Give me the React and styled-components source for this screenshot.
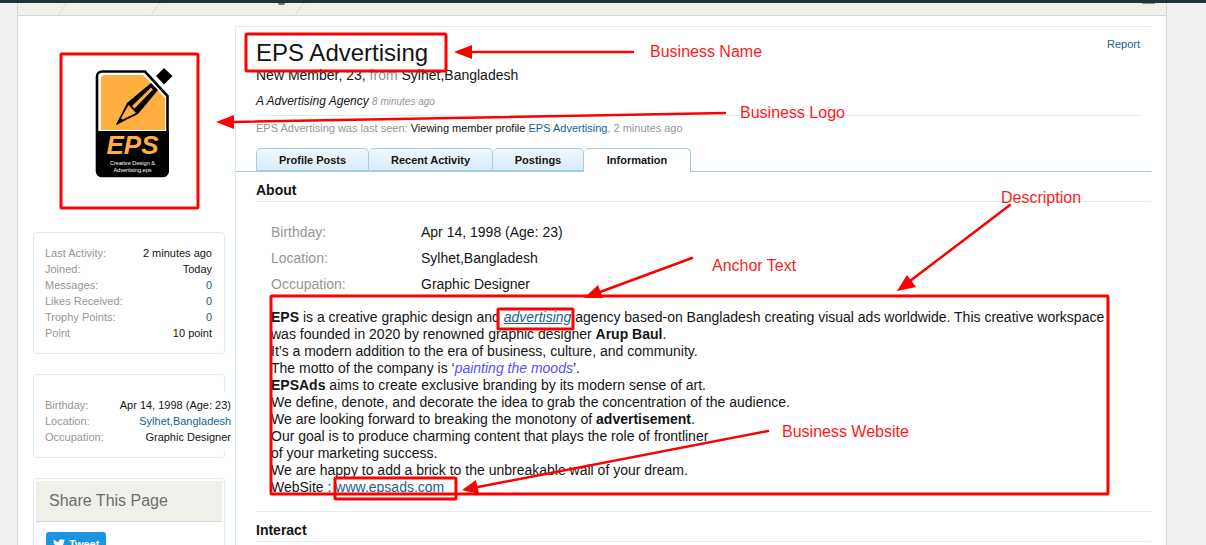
import styled, { createGlobalStyle } from "styled-components";
import { FaTwitter } from "react-icons/fa";

const GlobalStyle = createGlobalStyle`
  html, body {
    margin: 0;
    padding: 0;
    height: 545px;
    overflow: hidden;
    background: #f0f0f0;
    font-family: "Liberation Sans", Arial, sans-serif;
    color: #141414;
  }
`;

const Page = styled.div`
  position: relative;
  width: 1206px;
  height: 545px;
  overflow: hidden;
`;
const TopBar = styled.div`
  height: 3px;
  background: #22343a;
`;
const Wrapper = styled.div`
  margin: 0 39px 0 17px;
  border-left: 1px solid #d4d4d4;
  border-right: 1px solid #d4d4d4;
  background: #fff;
  height: 542px;
`;
const Strip = styled.div`
  display: flex;
  height: 12px;
  background: #f0f0ea;
  border-bottom: 1px solid #d6d6d0;
  overflow: hidden;
`;
const Crumb = styled.div`
  width: ${(p) => p.$w}px;
  height: 12px;
  border-right: 1px solid #d8d8d2;
  transform: skewX(-35deg);
`;
const Descender = styled.span`
  width: 7px;
  height: 2px;
  margin-left: -22px;
  border-radius: 0 0 3px 3px;
  background: #6d6d6d;
`;
const StripIcon = styled.span`
  width: 13px;
  height: 1px;
  margin-left: auto;
  margin-right: 11px;
  background: #8c8c8c;
`;
const Columns = styled.div`
  display: flex;
  padding: 10px 15px 0 15px;
  gap: 10px;
`;
const Sidebar = styled.div`
  width: 192px;
  flex-shrink: 0;
  display: flex;
  flex-direction: column;
`;
const Avatar = styled.div`
  height: 206px;
  padding: 39px 0 0 57px;
  box-sizing: border-box;
`;
const Card = styled.div`
  border: 1px solid #d7edfc;
  border-radius: 4px;
  box-sizing: border-box;
  margin-bottom: 20px;
  padding: ${(p) => p.$pad};
  height: ${(p) => p.$h}px;
  flex-shrink: 0;
`;
const Pairs = styled.dl`
  margin: 0 ${(p) => p.$over || 0}px 0 0;
  padding: ${(p) => (p.$over ? "6px 0" : 0)};
  background: #fff;
  position: relative;
`;
const Pair = styled.div`
  display: flex;
  justify-content: space-between;
  font-size: 11px;
  line-height: 16px;
`;
const Term = styled.dt`
  color: #969696;
`;
const Value = styled.dd`
  margin: 0;
  color: ${(p) => (p.$link ? "#176093" : "#141414")};
`;
const ShareHead = styled.div`
  height: 41px;
  margin: 2px;
  box-sizing: border-box;
  padding-left: 13px;
  background: #f0f0ea;
  border-bottom: 1px solid #d6d6d0;
  color: #6d6d6d;
  font-size: 16px;
  line-height: 39px;
`;
const TweetButton = styled.div`
  display: inline-flex;
  align-items: center;
  gap: 4px;
  margin: 8px 0 0 12px;
  width: 60px;
  height: 24px;
  box-sizing: border-box;
  padding: 0 0 0 7px;
  border-radius: 3px;
  background: #1b95e0;
  color: #fff;
  font-size: 11px;
  font-weight: bold;
`;
const Main = styled.div`
  position: relative;
  width: 916px;
  height: 519px;
  flex-shrink: 0;
  box-sizing: border-box;
  border-left: 1px solid #d7edfc;
  border-top: 1px solid #d7edfc;
  overflow: hidden;
`;
const Report = styled.a`
  position: absolute;
  top: 11px;
  right: 11px;
  font-size: 11px;
  line-height: 13px;
  color: #176093;
`;
const Header = styled.div`
  padding: 11px 11px 0 20px;
`;
const Title = styled.h1`
  margin: 0;
  font-size: 24px;
  font-weight: normal;
  line-height: 30px;
  color: #141414;
`;
const Subtitle = styled.div`
  margin-top: -1px;
  font-size: 14px;
  line-height: 17px;
  span {
    color: #969696;
  }
`;
const Status = styled.div`
  margin-top: 10px;
  padding-bottom: 6px;
  border-bottom: 1px solid #d7edfc;
  font-size: 12px;
  line-height: 14px;
  font-style: italic;
  small {
    font-size: 10px;
    color: #969696;
  }
`;
const LastSeen = styled.div`
  margin-top: 6px;
  font-size: 11px;
  line-height: 13px;
  color: #969696;
  b {
    font-weight: normal;
    color: #141414;
  }
  a {
    color: #176093;
  }
`;
const Tabs = styled.div`
  display: flex;
  margin-top: 13px;
  padding-left: 20px;
  height: 24px;
  box-sizing: border-box;
  border-bottom: 1px solid #a5cae4;
`;
const Tab = styled.div`
  width: ${(p) => p.$w}px;
  height: ${(p) => (p.$active ? 24 : 23)}px;
  box-sizing: border-box;
  border: 1px solid #a5cae4;
  border-bottom: ${(p) => (p.$active ? "none" : "1px solid #a5cae4")};
  border-left-width: ${(p) => (p.$first ? 1 : 0)}px;
  border-radius: 5px 5px 0 0;
  background: ${(p) =>
    p.$active ? "#fff" : "linear-gradient(to bottom, #f0f7fd, #d9ebfa)"};
  font-size: 11px;
  font-weight: bold;
  line-height: 23px;
  text-align: center;
  color: #141414;
`;
const Section = styled.div`
  padding: 0 0 0 20px;
`;
const SectionTitle = styled.h3`
  margin: ${(p) => p.$top}px 0 0;
  height: 21px;
  box-sizing: border-box;
  border-bottom: 1px solid #e0edf6;
  font-size: 14px;
  font-weight: bold;
  line-height: 18px;
  color: #141414;
`;
const InfoList = styled.div`
  padding: 17px 0 0 15px;
`;
const InfoRow = styled.div`
  display: flex;
  height: 26px;
  font-size: 14px;
  line-height: 26px;
`;
const InfoLabel = styled.div`
  width: 150px;
  color: #969696;
`;
const Description = styled.div`
  margin: 12px 0 0 15px;
  font-size: 14px;
  line-height: 17px;
  white-space: nowrap;
  a {
    color: #176093;
  }
  em {
    color: #5b4dff;
  }
`;
const Rule = styled.div`
  margin-top: 15px;
  border-top: 1px solid #e0edf6;
`;
const Overlay = styled.svg`
  position: absolute;
  left: 0;
  top: 0;
  pointer-events: none;
`;
const Label = styled.div`
  position: absolute;
  left: ${(p) => p.$x}px;
  top: ${(p) => p.$y}px;
  font-size: 16px;
  line-height: 18px;
  color: #fe1a1a;
  white-space: nowrap;
`;

const Logo = () => (
  <svg width="85" height="115" viewBox="90 65 85 115">
    <path
      d="M102 71.5 H145 L167.5 96 V171 a5 5 0 0 1 -5 5 H102 a5 5 0 0 1 -5 -5 V76.5 a5 5 0 0 1 5 -5 Z"
      fill="#fff"
      stroke="#000"
      strokeWidth="2.6"
    />
    <path d="M105 75 H143 L165 98 V130 H101 V79 a4 4 0 0 1 4 -4 Z" fill="#ffae40" />
    <path d="M96 131 H169 V171 a6 6 0 0 1 -6 6 H102 a6 6 0 0 1 -6 -6 Z" fill="#000" />
    <path d="M164 68 L172.5 76 L164 84.5 L156 76 Z" fill="#000" />
    <path d="M116 125 L127 103 L151 83 L158 90 L138 114 Z" fill="#000" />
    <path d="M119.5 121 L128.5 105 L136 113 Z" fill="#ffae40" />
    <path d="M116 125 L120 117 L123.5 121 Z" fill="#000" />
    <path d="M132 106 L151 87.5 L153 89.5 L134.5 108.5 Z" fill="#ffae40" />
    <text
      x="132.5"
      y="154"
      textAnchor="middle"
      fontFamily="'Liberation Sans', sans-serif"
      fontWeight="bold"
      fontStyle="italic"
      fontSize="26"
      fill="#ffae40"
    >
      EPS
    </text>
    <text
      x="132.5"
      y="164.5"
      textAnchor="middle"
      fontFamily="'Liberation Sans', sans-serif"
      fontSize="5.6"
      fill="#fff"
    >
      Creative Design &amp;
    </text>
    <text
      x="132.5"
      y="172"
      textAnchor="middle"
      fontFamily="'Liberation Sans', sans-serif"
      fontSize="5.6"
      fill="#fff"
    >
      Advertising.eps
    </text>
  </svg>
);

const stats = [
  ["Last Activity:", "2 minutes ago"],
  ["Joined:", "Today"],
  ["Messages:", "0", true],
  ["Likes Received:", "0", true],
  ["Trophy Points:", "0", true],
  ["Point", "10 point"],
];
const facts = [
  ["Birthday:", "Apr 14, 1998 (Age: 23)"],
  ["Location:", "Sylhet,Bangladesh", true],
  ["Occupation:", "Graphic Designer"],
];
const boxes = [
  [61, 54, 137, 154],
  [246, 34, 200, 37],
  [271, 296, 837, 198],
  [498, 309, 75, 20],
  [335, 478, 121, 21],
];
const arrows = [
  { line: "633,52 470,52", head: "454,52 472,45 472,59" },
  { line: "725,113 232,122", head: "216,122 234,115 234,129" },
  { line: "692,258 600,292", head: "584,298 598,285 603,298" },
  { line: "1010,205 910,281", head: "897,291 907,275 916,287" },
  { line: "768,431 478,487", head: "462,490 476,480 479,494" },
];

const App = () => (
  <Page>
    <GlobalStyle />
    <TopBar />
    <Wrapper>
      <Strip>
        <Crumb $w={44} />
        <Crumb $w={92} />
        <Crumb $w={143} />
        <Descender />
        <StripIcon />
      </Strip>
      <Columns>
        <Sidebar>
          <Avatar>
            <Logo />
          </Avatar>
          <Card $h={122} $pad="12px 12px 12px 11px">
            <Pairs>
              {stats.map(([term, value, link]) => (
                <Pair key={term}>
                  <Term>{term}</Term>
                  <Value $link={link}>{value}</Value>
                </Pair>
              ))}
            </Pairs>
          </Card>
          <Card $h={84} $pad="16px 0 0 11px">
            <Pairs $over={-7}>
              {facts.map(([term, value, link]) => (
                <Pair key={term}>
                  <Term>{term}</Term>
                  <Value $link={link}>{value}</Value>
                </Pair>
              ))}
            </Pairs>
          </Card>
          <Card $h={90} $pad="0">
            <ShareHead>Share This Page</ShareHead>
            <TweetButton>
              <FaTwitter size={12} />
              Tweet
            </TweetButton>
          </Card>
        </Sidebar>
        <Main>
          <Report>Report</Report>
          <Header>
            <Title>EPS Advertising</Title>
            <Subtitle>
              New Member, 23, <span>from</span> Sylhet,Bangladesh
            </Subtitle>
            <Status>
              A Advertising Agency <small>8 minutes ago</small>
            </Status>
            <LastSeen>
              EPS Advertising was last seen: <b>Viewing member profile</b>{" "}
              <a>EPS Advertising</a>, 2 minutes ago
            </LastSeen>
          </Header>
          <Tabs>
            <Tab $w={113} $first>Profile Posts</Tab>
            <Tab $w={124}>Recent Activity</Tab>
            <Tab $w={91}>Postings</Tab>
            <Tab $w={107} $active>Information</Tab>
          </Tabs>
          <Section>
            <SectionTitle $top={9}>About</SectionTitle>
            <InfoList>
              <InfoRow><InfoLabel>Birthday:</InfoLabel>Apr 14, 1998 (Age: 23)</InfoRow>
              <InfoRow><InfoLabel>Location:</InfoLabel>Sylhet,Bangladesh</InfoRow>
              <InfoRow><InfoLabel>Occupation:</InfoLabel>Graphic Designer</InfoRow>
            </InfoList>
            <Description>
              <b>EPS</b> is a creative graphic design and <a href="#"><i>advertising</i></a> agency based-on Bangladesh creating visual ads worldwide. This creative workspace
              <br />
              was founded in 2020 by renowned graphic designer <b>Arup Baul</b>.
              <br />
              It’s a modern addition to the era of business, culture, and community.
              <br />
              The motto of the company is ‘<em>painting the moods</em>’.
              <br />
              <b>EPSAds</b> aims to create exclusive branding by its modern sense of art.
              <br />
              We define, denote, and decorate the idea to grab the concentration of the audience.
              <br />
              We are looking forward to breaking the monotony of <b>advertisement</b>.
              <br />
              Our goal is to produce charming content that plays the role of frontliner
              <br />
              of your marketing success.
              <br />
              We are happy to add a brick to the unbreakable wall of your dream.
              <br />
              WebSite : <a>www.epsads.com</a>
            </Description>
            <Rule />
            <SectionTitle $top={9}>Interact</SectionTitle>
          </Section>
        </Main>
      </Columns>
    </Wrapper>
    <Overlay width="1206" height="545" viewBox="0 0 1206 545">
      {boxes.map(([x, y, w, h]) => (
        <rect key={x} x={x} y={y} width={w} height={h} rx="1" fill="none" stroke="#fe0000" strokeWidth="3" />
      ))}
      {arrows.map((a) => (
        <g key={a.head}>
          <polyline points={a.line} fill="none" stroke="#fe0000" strokeWidth="2.5" strokeLinecap="round" />
          <polygon points={a.head} fill="#fe0000" />
        </g>
      ))}
    </Overlay>
    <Label $x={650} $y={43}>Business Name</Label>
    <Label $x={740} $y={104}>Business Logo</Label>
    <Label $x={1001} $y={189}>Description</Label>
    <Label $x={712} $y={257}>Anchor Text</Label>
    <Label $x={782} $y={423}>Business Website</Label>
  </Page>
);

export default App;
